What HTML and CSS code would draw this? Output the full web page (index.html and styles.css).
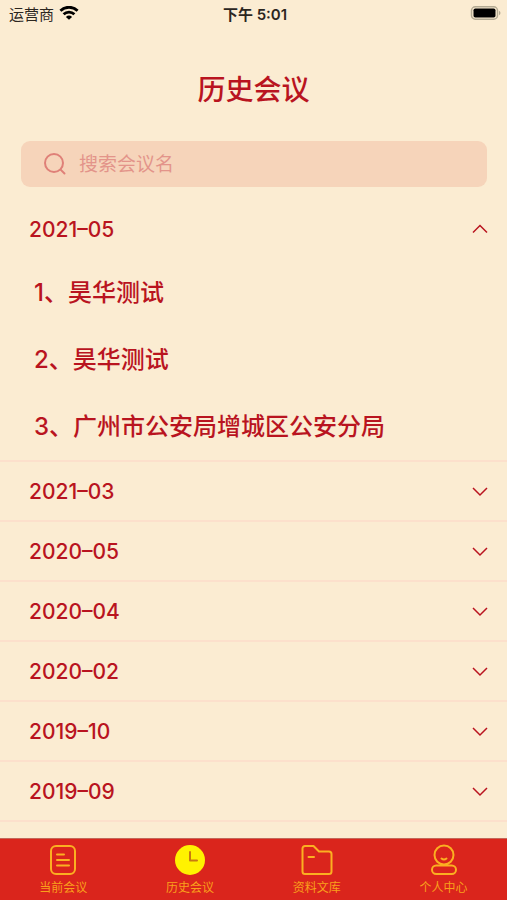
FILE: index.html
```html
<!DOCTYPE html>
<html lang="zh-CN">
<head>
  <meta charset="UTF-8">
  <meta name="viewport" content="width=device-width, initial-scale=1.0">
  <title>历史会议</title>
  <link rel="stylesheet" href="styles.css">
</head>
<body>

  <!-- Status bar -->
  <div class="status-bar">
    <div class="carrier">
      <span>运营商</span>
      <svg width="20" height="14" viewBox="0 0 20 14" fill="none" stroke="#000" stroke-width="2.8">
        <path d="M1.400 4.700a12.400 12.400 0 0 1 17.200 0"/>
        <path d="M4.600 8.300a7.800 7.800 0 0 1 10.800 0"/>
        <path d="M10 13.800 6.900 10.900a4.500 4.500 0 0 1 6.200 0z" fill="#000" stroke="none"/>
      </svg>
    </div>
    <div class="time">下午 5:01</div>
    <div class="battery">
      <svg width="31" height="14" viewBox="0 0 31 14">
        <rect x="1.500" y="0.800" width="26" height="12.400" rx="3.800" fill="none" stroke="#b3aa93" stroke-width="1.500"/>
        <rect x="3.500" y="2.500" width="22" height="9" rx="1.800" fill="#000"/>
        <path d="M29 4.800c2 .8 2 3.600 0 4.400z" fill="#b3aa93"/>
      </svg>
    </div>
  </div>

  <h1 class="title">历史会议</h1>

  <!-- Search -->
  <label class="search">
    <svg width="24" height="24" viewBox="0 0 24 24" fill="none" stroke="#df8078" stroke-width="2" stroke-linecap="round">
      <circle cx="11" cy="11" r="9"/>
      <path d="M17.600 17.600 21.500 21.500"/>
    </svg>
    <input type="search" placeholder="搜索会议名" aria-label="搜索会议名">
  </label>

  <!-- Meetings by month -->
  <main class="months">
    <section class="month">
      <button class="month-head open" aria-expanded="true">2021–05
        <svg width="18" height="12" viewBox="0 0 18 12"><path d="M2 9.500 9 2.500l7 7"/></svg>
      </button>
      <ul class="meetings">
        <li>1、昊华测试</li>
        <li>2、昊华测试</li>
        <li>3、广州市公安局增城区公安分局</li>
      </ul>
    </section>
    <section class="month">
      <button class="month-head" aria-expanded="false">2021–03
        <svg width="18" height="12" viewBox="0 0 18 12"><path d="m2 3 7 7 7-7"/></svg>
      </button>
    </section>
    <section class="month">
      <button class="month-head" aria-expanded="false">2020–05
        <svg width="18" height="12" viewBox="0 0 18 12"><path d="m2 3 7 7 7-7"/></svg>
      </button>
    </section>
    <section class="month">
      <button class="month-head" aria-expanded="false">2020–04
        <svg width="18" height="12" viewBox="0 0 18 12"><path d="m2 3 7 7 7-7"/></svg>
      </button>
    </section>
    <section class="month">
      <button class="month-head" aria-expanded="false">2020–02
        <svg width="18" height="12" viewBox="0 0 18 12"><path d="m2 3 7 7 7-7"/></svg>
      </button>
    </section>
    <section class="month">
      <button class="month-head" aria-expanded="false">2019–10
        <svg width="18" height="12" viewBox="0 0 18 12"><path d="m2 3 7 7 7-7"/></svg>
      </button>
    </section>
    <section class="month">
      <button class="month-head" aria-expanded="false">2019–09
        <svg width="18" height="12" viewBox="0 0 18 12"><path d="m2 3 7 7 7-7"/></svg>
      </button>
    </section>
  </main>

  <!-- Tab bar -->
  <nav class="tabs">
    <a href="#current">
      <svg width="32" height="32" viewBox="0 0 32 32">
        <rect x="4" y="2" width="24" height="28" rx="5"/>
        <path d="M10 10.500h7M10 16h12M10 21.500h12"/>
      </svg>
      当前会议
    </a>
    <a href="#history" class="active">
      <svg width="32" height="32" viewBox="0 0 32 32">
        <circle cx="16" cy="16" r="15" fill="#fff200" stroke="none"/>
        <path d="M16 8v8.500h7" stroke="#c87a10"/>
      </svg>
      历史会议
    </a>
    <a href="#library">
      <svg width="32" height="32" viewBox="0 0 32 32">
        <path d="M4 2h8.500l5.500 5.500H28a2.500 2.500 0 0 1 2.500 2.500v17.500A2.500 2.500 0 0 1 28 30H4a2.500 2.500 0 0 1-2.500-2.500v-23A2.500 2.500 0 0 1 4 2z"/>
        <path d="M7.500 13H13"/>
      </svg>
      资料文库
    </a>
    <a href="#me">
      <svg width="32" height="32" viewBox="0 0 32 32">
        <circle cx="16" cy="11" r="9.500"/>
        <path d="M13.500 14.500c1.500 1.200 3.500 1.200 5 0"/>
        <rect x="4" y="21.500" width="24" height="8.500" rx="4.200"/>
      </svg>
      个人中心
    </a>
  </nav>

  <script>
    // Open and close a month
    document.querySelectorAll('.month-head').forEach((head) => {
      head.addEventListener('click', () => {
        const open = head.classList.toggle('open');
        head.setAttribute('aria-expanded', open);
        head.querySelector('path').setAttribute('d', open ? 'M2 9.5 9 2.5l7 7' : 'm2 3 7 7 7-7');
        const list = head.nextElementSibling;
        if (list) list.hidden = !open;
      });
    });
  </script>
</body>
</html>
```
FILE: styles.css
```css
* {
  box-sizing: border-box;
}

body {
  margin: 0;
  height: 100vh;
  display: flex;
  flex-direction: column;
  background-color: #fbecd2;
  color: #b9141f;
  font-family: Inter, "Noto Sans CJK SC", sans-serif;
}

button,
input {
  font: inherit;
  color: inherit;
  background: none;
  border: none;
}

/* Status bar */
.status-bar {
  display: grid;
  grid-template-columns: 1fr auto 1fr;
  align-items: center;
  height: 26px;
  padding: 0 6px 0 9px;
  color: #2b261f;
  font-size: 15px;
}

.carrier {
  display: flex;
  align-items: center;
  gap: 5px;
}

.time {
  font-size: 15px;
  font-weight: 600;
}

.battery {
  display: flex;
  justify-content: flex-end;
}

.title {
  margin: 44px 0 30px;
  text-align: center;
  font-size: 28px;
  font-weight: 500;
  line-height: 41px;
}

/* Search */
.search {
  display: flex;
  align-items: center;
  gap: 12px;
  height: 46px;
  margin: 0 20px 13px 21px;
  padding: 0 22px;
  border-radius: 9px;
  background-color: #f6d4ba;
}

.search input {
  flex: 1;
  min-width: 0;
  padding: 0;
  font-size: 19px;
  outline: none;
}

.search input::placeholder {
  color: #e3948a;
  opacity: 1;
}

/* Month list */
.months {
  flex: 1;
  min-height: 0;
  overflow-y: auto;
  scrollbar-width: none;
}

.month {
  border-bottom: 2px solid #fce0cc;
}

.month-head {
  display: flex;
  align-items: center;
  justify-content: space-between;
  width: 100%;
  height: 58px;
  padding: 0 18px 0 29px;
  font-size: 21px;
  font-weight: 500;
  cursor: pointer;
}

.month-head svg {
  fill: none;
  stroke: #b9141f;
  stroke-width: 1.5;
}

.meetings {
  margin: 0;
  padding: 1px 34px 0;
  list-style: none;
  font-size: 24px;
  font-weight: 500;
}

.meetings li {
  line-height: 67px;
}

/* Tab bar */
.tabs {
  display: flex;
  height: 62px;
  border-top: 1px solid #c4685a;
  background-color: #da251c;
}

.tabs a {
  flex: 1;
  display: flex;
  flex-direction: column;
  align-items: center;
  gap: 3px;
  padding-top: 5px;
  color: #f9a01b;
  font-size: 12px;
  line-height: 18px;
  text-decoration: none;
}

.tabs svg {
  fill: none;
  stroke: #fbb021;
  stroke-width: 2;
  stroke-linecap: round;
  stroke-linejoin: round;
}
```
